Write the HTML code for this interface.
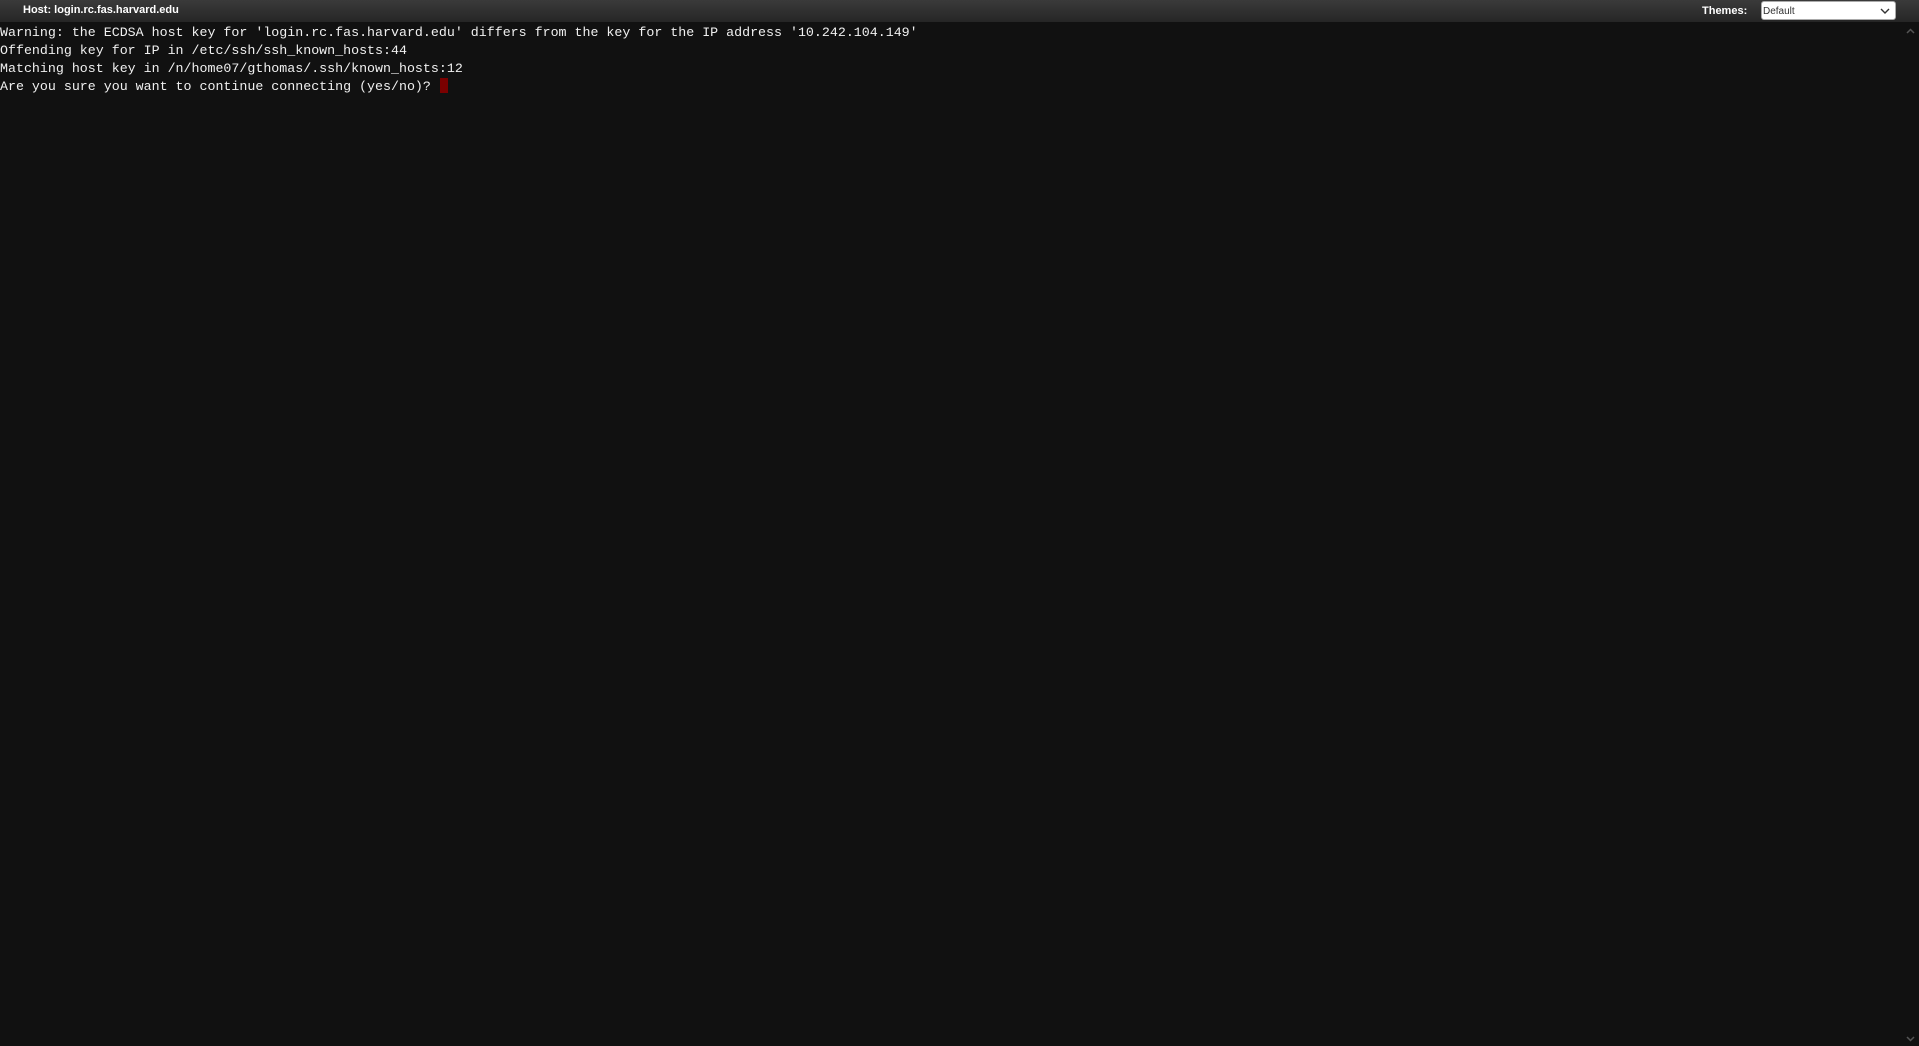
<!DOCTYPE html>
<html><head><meta charset="utf-8"><style>
html,body{margin:0;padding:0;width:1919px;height:1046px;overflow:hidden;background:#111;}
.hdr{position:absolute;left:0;top:0;width:1919px;height:22px;background:linear-gradient(#3a3a3a,#262626);}
.title{position:absolute;left:23px;top:4px;font:bold 11px "Liberation Sans",sans-serif;color:#fff;}
.th{position:absolute;left:1702px;top:5px;font:bold 11px "Liberation Sans",sans-serif;color:#fff;}
.sel{position:absolute;left:1761px;top:1px;width:135px;height:19px;background:#fff;border-radius:3px;box-sizing:border-box;border:1px solid #aaa;font:10px "Liberation Sans",sans-serif;color:#333;padding:4px 0 0 1px;}
.sel svg{position:absolute;right:5px;top:6px;}
.term{position:absolute;left:0;top:24px;font:13.3px/18px "Liberation Mono",monospace;color:#f0f0f0;white-space:pre;}
.cur{display:inline-block;width:8px;height:15px;background:#7a0000;vertical-align:-3px;margin-left:1px;}
.ar{position:absolute;left:1906px;}
</style></head><body>
<div class="hdr"><div class="title">Host: login.rc.fas.harvard.edu</div><div class="th">Themes:</div>
<div class="sel">Default<svg width="10" height="6" viewBox="0 0 10 6"><path d="M1 1L5 5L9 1" stroke="#333" stroke-width="1.4" fill="none"/></svg></div></div>
<div class="term">Warning: the ECDSA host key for 'login.rc.fas.harvard.edu' differs from the key for the IP address '10.242.104.149'
Offending key for IP in /etc/ssh/ssh_known_hosts:44
Matching host key in /n/home07/gthomas/.ssh/known_hosts:12
Are you sure you want to continue connecting (yes/no)? <span class="cur"></span></div>
<svg class="ar" style="top:28px" width="9" height="6" viewBox="0 0 9 6"><path d="M1 5L4.5 1.5L8 5" stroke="#555" stroke-width="1.5" fill="none"/></svg>
<svg class="ar" style="top:1036px" width="9" height="6" viewBox="0 0 9 6"><path d="M1 1L4.5 4.5L8 1" stroke="#555" stroke-width="1.5" fill="none"/></svg>
</body></html>
